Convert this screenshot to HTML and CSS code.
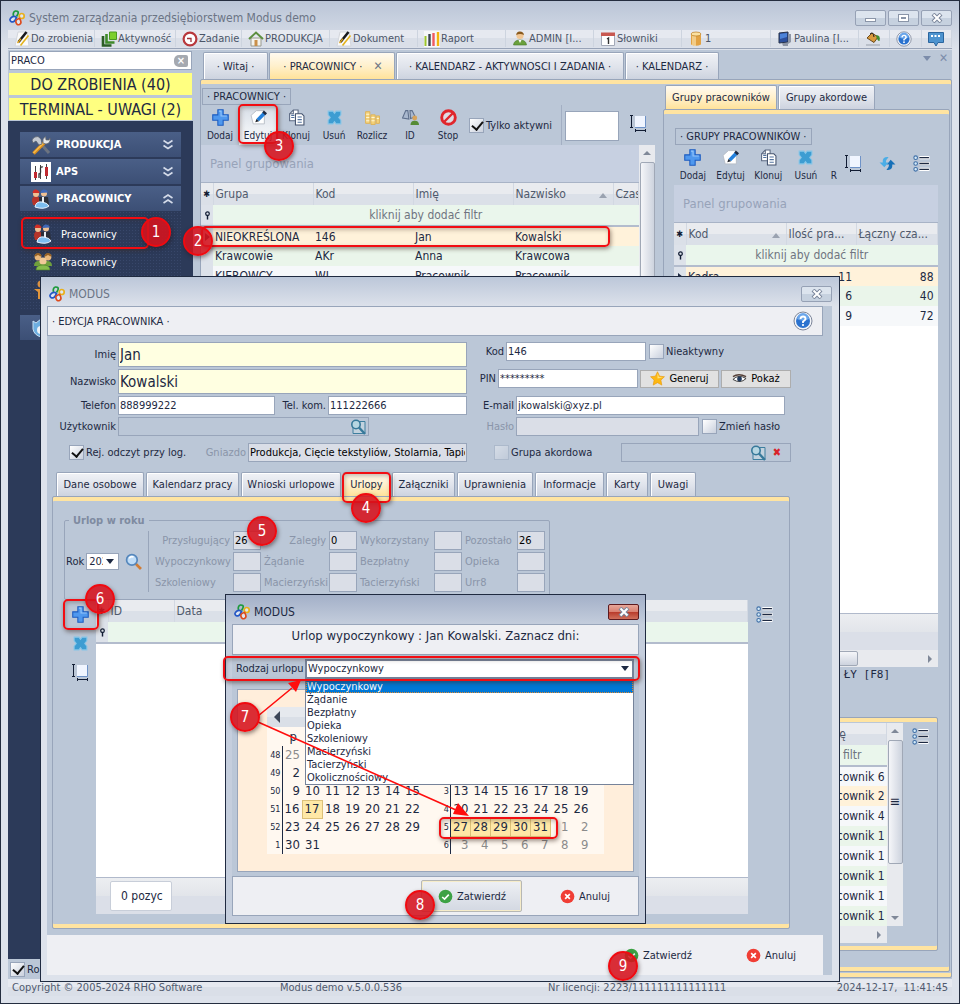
FILE: index.html
```html
<!DOCTYPE html>
<html lang="pl">
<head>
  <meta charset="UTF-8" />
  <meta name="viewport" content="width=device-width, initial-scale=1.0" />
  <title>System zarządzania przedsiębiorstwem Modus demo</title>
  <link rel="stylesheet" href="styles.css">
</head>
<body>
  <!-- Ikony -->
  <svg class="sprite" aria-hidden="true">
    <symbol id="i-logo" viewBox="0 0 16 16"><g fill="#dfe6f0" stroke-width="1.700"><path d="M4.500 6Q3.500 2 6.500 1Q10 .8 9 4L7.500 6.500" fill="none" stroke="#1c9a3c"/><circle cx="12.700" cy="6" r="2.500" stroke="#e9b01c"/><path d="M7.500 7.500Q5.500 5.500 3 7Q-.5 9.500 2 11.500Q4.500 13 6.500 9.500z" stroke="#2457c5"/><path d="M10.500 8.500Q6 9.500 7 12.500Q8 15.500 10.500 14.500Q13.500 13 10.500 8.500z" stroke="#dd4a1c"/></g></symbol>
    <symbol id="i-note" viewBox="0 0 16 16"><path d="M4 1h9l2 14H1z" fill="#fafafa" stroke="#d3d6dc"/><path d="M4.500 11L12.500 1" stroke="#17191d" stroke-width="2.600"/><path d="M3.500 12l3.500-4.200" stroke="#e0a51a" stroke-width="1.400"/><path d="M6.500 14.500L14.500 4.500" stroke="#e3b21c" stroke-width="1.600"/></symbol>
    <symbol id="i-activity" viewBox="0 0 16 16"><path d="M2 5v9.500h8.500" fill="none" stroke="#2b5d24" stroke-width="2.600"/><path d="M5.500 3v8.500h8" fill="none" stroke="#3f8a2a" stroke-width="2.600"/><path d="M8.500 1h7v7.500h-7z" fill="#7ccf2c" stroke="#4b9a20"/></symbol>
    <symbol id="i-clock" viewBox="0 0 16 16"><circle cx="8" cy="8" r="6.400" fill="#fff" stroke="#b8383c" stroke-width="2.200"/><path d="M5 7.500h4V11" fill="none" stroke="#a03438" stroke-width="1.300"/></symbol>
    <symbol id="i-house" viewBox="0 0 16 16"><path d="M3 7h10v8H3z" fill="#f3f3ee" stroke="#9a9a90"/><path d="M1 8l7-6.500L15 8" fill="none" stroke="#5c8e3f" stroke-width="2"/><path d="M6.500 9h3v6h-3z" fill="#c98f4a"/></symbol>
    <symbol id="i-bars" viewBox="0 0 16 16"><path d="M0 0h16v16H0z" fill="#f6f7f9"/><path d="M1.500 5v10" stroke="#9cc52c" stroke-width="2"/><path d="M5.500 3v12" stroke="#3a4450" stroke-width="2.400"/><path d="M9.500 2v13" stroke="#f05a60" stroke-width="2.400"/><path d="M14 1v14" stroke="#f3b50e" stroke-width="2.400"/></symbol>
    <symbol id="i-user" viewBox="0 0 16 16"><circle cx="8" cy="4.500" r="3.600" fill="#f2c795"/><path d="M4.200 4Q4.500.3 8 .5T12 4Q8 1.800 4.200 4z" fill="#8a5a1e"/><path d="M1.500 14Q2 9 8 9t6.500 5z" fill="#6aa03c" stroke="#48782a" stroke-width=".6"/><path d="M6.500 9h3L8 12z" fill="#fff"/></symbol>
    <symbol id="i-cal" viewBox="0 0 16 16"><path d="M1.500 2.500h13v12h-13z" fill="#fff" stroke="#a4aab8"/><path d="M1 1.500h14V5H1z" fill="#c85850"/><path d="M7 8l1.500-1v6" fill="none" stroke="#333" stroke-width="1.400"/></symbol>
    <symbol id="i-db" viewBox="0 0 16 16"><path d="M3 3v10.500Q8 16 13 13.500V3z" fill="#e2a243"/><path d="M5 4v10.500M7 4v11" stroke="#fbe3ae" stroke-width="1.300"/><ellipse cx="8" cy="3" rx="5" ry="2" fill="#fbe0a0" stroke="#b87a20" stroke-width=".7"/></symbol>
    <symbol id="i-monitor" viewBox="0 0 16 16"><path d="M2 2l9-1v10l-9 1z" fill="#2c4f9c" stroke="#27324a"/><path d="M3 3l7-1v4L3 8z" fill="#4d83d8"/><path d="M11 3h3v8l-3 2zM5 12h6v3H6z" fill="#8d95a5"/></symbol>
    <symbol id="i-bucket" viewBox="0 0 16 16"><path d="M2 7l5-5 6 4-4 5.500z" fill="#d99a3c" stroke="#6b4a1c"/><path d="M5 3q3-3 4 3" fill="none" stroke="#222"/><path d="M11 4q5 0 3.500 6Q12 10 11 4z" fill="#3f8c30"/><path d="M1 13h14v2H1z" fill="#b9bfc9"/></symbol>
    <symbol id="i-help" viewBox="0 0 20 20"><circle cx="10" cy="10" r="9" fill="#f4f6fa" stroke="#7b8498"/><circle cx="10" cy="10" r="7" fill="#2a72cf"/><path d="M4 8a6 6 0 0 1 12 0q-6 3-12 0z" fill="#6ba6ea"/><path d="M7.500 8q.2-2.500 2.600-2.500T12.600 8Q12 9.500 10 10.500V12" fill="none" stroke="#fff" stroke-width="1.800"/><circle cx="10" cy="14" r="1.100" fill="#fff"/></symbol>
    <symbol id="i-chat" viewBox="0 0 16 16"><path d="M.5 1.500h15v10H10l-2 3.500-2-3.500H.5z" fill="#4d93cf" stroke="#2a659e"/><path d="M3 5h10" stroke="#fff" stroke-width="2" stroke-dasharray="2 1.500"/></symbol>
    <symbol id="i-tools" viewBox="0 0 20 20"><path d="M10 9l8 9" stroke="#6d7480" stroke-width="3"/><path d="M2.500 18.500L13 8" stroke="#d98d1e" stroke-width="3.600"/><path d="M2.500 18L12.500 8" stroke="#f6bd4e" stroke-width="1.400"/><path d="M1 5q2-4 6-3.500L10 4l1 5-3 1-3-4-3 2z" fill="#c4c9d1" stroke="#565d68" stroke-width=".7"/><path d="M12 8q-1-4 2.500-6.500L15 5l3 0 1-2q1 5-4 6z" fill="#e3e6ea" stroke="#666" stroke-width=".7"/></symbol>
    <symbol id="i-aps" viewBox="0 0 20 20"><path d="M0 0h20v20H0z" fill="#fff"/><path d="M4.500 4v14M9.500 3v14M15.500 2v15" stroke="#444"/><path d="M3 10h3v6H3zM14 5h3v9h-3z" fill="#c02a30"/><path d="M12 5q-3-1-2.500 3T8 12v4" fill="none" stroke="#333" stroke-width="1.300"/></symbol>
    <symbol id="i-workers" viewBox="0 0 20 20"><path d="M1 12Q1 7 5 7t4 6l-2 3H2z" fill="#b5342a"/><circle cx="5" cy="5" r="3" fill="#efc093"/><path d="M1.500 4Q2 0 5 .5T8.500 4z" fill="#d22f26"/><circle cx="13" cy="4.500" r="3" fill="#efc093"/><path d="M9.500 4Q10 .5 13 .5T17 3.500z" fill="#3f68b8"/><path d="M8 8h9l1 8H8z" fill="#2b2e38"/><path d="M11 8h2v7h-2z" fill="#e8edf3"/><path d="M4 18q1-6 7-5t7 4q-5 4-14 1z" fill="#7cbdf0" stroke="#e7f3ff"/></symbol>
    <symbol id="i-team" viewBox="0 0 20 20"><circle cx="5" cy="5" r="3.400" fill="#e9b87c"/><circle cx="15" cy="5" r="3.400" fill="#e9b87c"/><path d="M2 4q3-4 6 0M12 4q3-4 6 0" stroke="#9b6426" stroke-width="2" fill="none"/><path d="M1 14q0-5 5-5h8q5 0 5 5z" fill="#6fa03d"/><circle cx="10" cy="9" r="3.600" fill="#f1c998"/><path d="M3 18q0-5 7-5t7 5z" fill="#86bc4c" stroke="#4c7b28" stroke-width=".6"/></symbol>
    <symbol id="i-person" viewBox="0 0 20 20"><circle cx="8" cy="4" r="3.500" fill="#d99042"/><path d="M1 9h14l-3 3v7H5v-7z" fill="#e0953c"/></symbol>
    <symbol id="i-shield" viewBox="0 0 20 20"><path d="M2 3l3 2 5-4 5 4 3-2v8q-1 6-8 8-7-2-8-8z" fill="#6daee0" stroke="#c8e0f4"/><circle cx="10" cy="12" r="4" fill="#eef3f8"/></symbol>
    <symbol id="i-plus" viewBox="0 0 16 16"><path d="M5.500.7h5v4.800h4.800v5h-4.800v4.800h-5v-4.800H.7v-5h4.800z" fill="#4f98ee" stroke="#1d5cc0"/><path d="M6.500 2h2v4.500H14" fill="none" stroke="#93c4fa"/></symbol>
    <symbol id="i-edit" viewBox="0 0 16 16"><path d="M1 6l5-4.500h7.500V14H3z" fill="#fff" stroke="#b4b9c3" stroke-width=".8"/><path d="M6 9.500L12 3l2.500 2.300L8.500 11.500z" fill="#2380dc"/><path d="M11.500 3.300L13 1.500l3 2.500-1.600 1.800z" fill="#1c2a44"/><path d="M5 12.500L6 9.500l2.500 2z" fill="#20242c"/></symbol>
    <symbol id="i-clone" viewBox="0 0 16 16"><path d="M1.500 4.500L5 1h4.500v10h-8z" fill="#fff" stroke="#5b6982"/><path d="M7 4.500h6l2 2V15H7z" fill="#fff" stroke="#44536e"/><path d="M9 7.500h4M9 10h4M9 12.500h4M3 6h3M3 8h3" stroke="#52739f"/><path d="M5 1v3.500H1.500" fill="none" stroke="#5b6982"/></symbol>
    <symbol id="i-del" viewBox="0 0 16 16"><path d="M2 2h4.500L8 4l1.500-2H14v3.500L12 8l2 2.500V14H9.500L8 12l-1.500 2H2v-3.500L4 8 2 5.500z" fill="#3d9dd2" stroke="#86c6e8"/></symbol>
    <symbol id="i-coins" viewBox="0 0 16 16"><path d="M1.500 2.500h4v11h-4zM6.500 5.500h4v9h-4zM11.500 6.500h3v7h-3z" fill="#f3d27c" stroke="#e0b04c" stroke-width=".8"/><path d="M2 5h3M2 8h3M2 11h3M7 8h3M7 11h3M12 9h2" stroke="#fff6d4"/></symbol>
    <symbol id="i-binoc" viewBox="0 0 16 16"><path d="M.5 8.500L3.500 1.500h2l1 8zM7.500 1.500h2l3 6-4.500 1.500z" fill="#a9b8ce" stroke="#5e6f8b"/><circle cx="12" cy="8.500" r="2.300" fill="#d7a35b"/><path d="M8 15q0-4 4-4t4 4z" fill="#558b35"/></symbol>
    <symbol id="i-stop" viewBox="0 0 16 16"><circle cx="8" cy="8" r="6.400" fill="#dfdde4" stroke="#e0262c" stroke-width="2.700"/><path d="M4 12l8-8" stroke="#e0262c" stroke-width="2.300"/></symbol>
    <symbol id="i-fit" viewBox="0 0 17 17"><path d="M5 1h10v11H5z" fill="#f0f5ff"/><path d="M15.500 1v11.500H5" fill="none" stroke="#6f93c8"/><path d="M0 .5h3M1.500 .5v12M0 12.500h3M5 15.500h11M5.500 14v3M15.500 14v3" stroke="#111c33" fill="none"/></symbol>
    <symbol id="i-refresh" viewBox="0 0 16 16"><path d="M9 2Q3 1.500 3.500 7H.5l4.500 4.500L9 7H6.500Q6.500 4 9 2z" fill="#4aade6"/><path d="M7 14q6 1 5.500-5h3L11 4.500 7.500 9h2Q9.500 12 7 14z" fill="#1670b8"/></symbol>
    <symbol id="i-list" viewBox="0 0 16 16"><g fill="#d6ecfa" stroke="#3e6ea6"><circle cx="2.500" cy="2.500" r="1.700"/><circle cx="2.500" cy="8" r="1.700"/><circle cx="2.500" cy="13.500" r="1.700"/></g><path d="M6 2.500h9.500M6 8h9.500M6 13.500h9.500" stroke="#fff" stroke-width="3"/><path d="M6 2.500h9M6 8h9M6 13.500h9" stroke="#1d2942" stroke-width="1.200"/></symbol>
    <symbol id="i-star" viewBox="0 0 16 16"><path d="M8 .8l2.200 4.700 5.200.6-3.800 3.600 1 5.300L8 12.400 3.400 15l1-5.300L.6 6.100l5.200-.6z" fill="#fdb813" stroke="#e89a10" stroke-width=".7"/><path d="M8 2l1.500 4.500L14 7 8 8z" fill="#ffe27a"/></symbol>
    <symbol id="i-eye" viewBox="0 0 16 16"><path d="M1 9q6-6 14-1-6 6-14 1z" fill="#fff" stroke="#333"/><circle cx="8" cy="8.500" r="2.600" fill="#223a5e"/><path d="M1 6q6-4 14 0" fill="none" stroke="#554038" stroke-width="1.500"/></symbol>
    <symbol id="i-ok" viewBox="0 0 16 16"><circle cx="8" cy="8" r="7.300" fill="#3da245"/><path d="M4.500 8.500l2.500 2.300 4.500-4.800" fill="none" stroke="#fff" stroke-width="1.700"/></symbol>
    <symbol id="i-cancel" viewBox="0 0 16 16"><circle cx="8" cy="8" r="7.300" fill="#f03e35"/><path d="M5.500 5.500l5 5M10.500 5.500l-5 5" stroke="#fff" stroke-width="1.800"/></symbol>
    <symbol id="i-search" viewBox="0 0 16 16"><path d="M10 10l5 5" stroke="#d07c35" stroke-width="2.600"/><circle cx="6.500" cy="6.500" r="5" fill="#bfdcf7" stroke="#5587bc" stroke-width="1.600"/><path d="M4 5q2-2.500 4-1" stroke="#fff" stroke-width="1.400" fill="none"/></symbol>
    <symbol id="i-find" viewBox="0 0 16 16"><path d="M3 2.500h12v12H3z" fill="#c2d2de" stroke="#3e7f9f"/><circle cx="6" cy="5.500" r="4.200" fill="#b6d6e2" stroke="#37799a" stroke-width="1.600"/><path d="M9 8.500l6 6.500" stroke="#37799a" stroke-width="2.400"/></symbol>
    <symbol id="i-down" viewBox="0 0 12 12"><path d="M1.500 1.500l4.500 3 4.500-3M1.500 6.500l4.500 3 4.500-3" fill="none" stroke="#d5dcea" stroke-width="1.600"/></symbol>
    <symbol id="i-up" viewBox="0 0 12 12"><path d="M1.500 5l4.500-3 4.500 3M1.500 10l4.500-3 4.500 3" fill="none" stroke="#d5dcea" stroke-width="1.600"/></symbol>
    <symbol id="i-x" viewBox="0 0 12 10"><path d="M2 1l8 8M10 1L2 9" stroke="#7a869b" stroke-width="4"/><path d="M2.500 1.500l7 7M9.500 1.500l-7 7" stroke="#fff" stroke-width="2"/></symbol>
    <symbol id="i-filter" viewBox="0 0 10 10"><circle cx="5" cy="3" r="2" fill="none" stroke="#111c33" stroke-width="1.400"/><path d="M5 5v4.500" stroke="#111c33" stroke-width="1.600"/></symbol>
  </svg>

  <div class="app">
    <header class="titlebar">
      <svg class="icon"><use href="#i-logo"/></svg>
      <span>System zarządzania przedsiębiorstwem Modus demo</span>
      <div class="winbtns">
        <button class="winbtn" aria-label="Minimalizuj"><span class="min"></span></button>
        <button class="winbtn" aria-label="Maksymalizuj"><span class="max"></span></button>
        <button class="winbtn" aria-label="Zamknij"><svg><use href="#i-x"/></svg></button>
      </div>
    </header>

    <nav class="mainbar">
      <button><svg class="icon"><use href="#i-note"/></svg>Do zrobienia</button>
      <button><svg class="icon"><use href="#i-activity"/></svg>Aktywność</button>
      <button><svg class="icon"><use href="#i-clock"/></svg>Zadanie</button>
      <button><svg class="icon"><use href="#i-house"/></svg>PRODUKCJA</button>
      <button><svg class="icon"><use href="#i-note"/></svg>Dokument</button>
      <button><svg class="icon"><use href="#i-bars"/></svg>Raport</button>
      <button><svg class="icon"><use href="#i-user"/></svg>ADMIN [I...</button>
      <button><svg class="icon"><use href="#i-cal"/></svg>Słowniki</button>
      <button><svg class="icon"><use href="#i-db"/></svg>1</button>
      <button><svg class="icon"><use href="#i-monitor"/></svg>Paulina [I...</button>
      <button aria-label="Kolory"><svg class="icon"><use href="#i-bucket"/></svg></button>
      <button aria-label="Pomoc"><svg class="icon"><use href="#i-help"/></svg></button>
      <button aria-label="Wiadomości"><svg class="icon"><use href="#i-chat"/></svg></button>
    </nav>

    <div class="workspace">
      <aside class="sidebar">
        <div class="search">
          <input type="text" value="PRACO" aria-label="Szukaj">
          <button aria-label="Wyczyść">×</button>
        </div>
        <button class="alert">DO ZROBIENIA (40)</button>
        <button class="alert">TERMINAL - UWAGI (2)</button>
        <div class="menu">
          <button class="group"><svg><use href="#i-tools"/></svg><span>PRODUKCJA</span><svg class="chev"><use href="#i-down"/></svg></button>
          <button class="group"><svg><use href="#i-aps"/></svg><span>APS</span><svg class="chev"><use href="#i-down"/></svg></button>
          <button class="group"><svg><use href="#i-workers"/></svg><span>PRACOWNICY</span><svg class="chev"><use href="#i-up"/></svg></button>
          <div class="submenu">
            <a href="#"><svg><use href="#i-workers"/></svg>Pracownicy</a>
            <a href="#"><svg><use href="#i-team"/></svg>Pracownicy</a>
            <a href="#" aria-label="Kadry"><svg><use href="#i-person"/></svg></a>
          </div>
          <button class="group" aria-label="Ochrona"><svg><use href="#i-shield"/></svg></button>
        </div>
        <label class="remember"><input type="checkbox" class="check" checked>Ro</label>
      </aside>

      <main class="main">
        <div class="tabs maintabs">
          <button class="tab">· Witaj ·</button>
          <button class="tab active">· PRACOWNICY · <b>✕</b></button>
          <button class="tab">· KALENDARZ - AKTYWNOSCI I ZADANIA ·</button>
          <button class="tab">· KALENDARZ ·</button>
          <span class="tabtools"><i class="tri"></i><b>✕</b></span>
        </div>
        <div class="panel columns">
          <section class="left">
            <span class="caption">· PRACOWNICY ·</span>
            <div class="toolbar">
              <button><svg><use href="#i-plus"/></svg>Dodaj</button>
              <button class="hot"><svg><use href="#i-edit"/></svg>Edytuj</button>
              <button><svg><use href="#i-clone"/></svg>Klonuj</button>
              <button><svg><use href="#i-del"/></svg>Usuń</button>
              <button><svg><use href="#i-coins"/></svg>Rozlicz</button>
              <button><svg><use href="#i-binoc"/></svg>ID</button>
              <button><svg><use href="#i-stop"/></svg>Stop</button>
              <label class="onlyactive"><input type="checkbox" class="check" checked>Tylko aktywni</label>
              <input type="text" class="quick" aria-label="Filtr">
              <button aria-label="Dopasuj" class="solo"><svg><use href="#i-fit"/></svg></button>
            </div>
            <div class="gridwrap">
              <div class="gridbody">
                <div class="grouppanel">Panel grupowania</div>
                <table class="grid">
                  <colgroup><col class="c-ind"><col class="c-100"><col class="c-100"><col class="c-100"><col class="c-100"><col></colgroup>
                  <thead>
                    <tr><th>✱</th><th>Grupa</th><th>Kod</th><th>Imię</th><th class="sorted">Nazwisko<i class="sort"></i></th><th>Czas</th></tr>
                    <tr class="filter"><td><svg><use href="#i-filter"/></svg></td><td colspan="5">kliknij aby dodać filtr</td></tr>
                  </thead>
                  <tbody>
                    <tr class="sel"><td><i class="cur"></i></td><td>NIEOKREŚLONA</td><td>146</td><td>Jan</td><td>Kowalski</td><td></td></tr>
                    <tr class="even"><td></td><td>Krawcowie</td><td>AKr</td><td>Anna</td><td>Krawcowa</td><td></td></tr>
                    <tr><td></td><td>KIEROWCY</td><td>WL</td><td>Pracownik</td><td>Pracownik</td><td></td></tr>
                  </tbody>
                </table>
              </div>
              <div class="vscroll"><i class="up"></i><span class="thumb"></span></div>
            </div>
          </section>

          <section class="right">
            <div class="tabs righttabs">
              <button class="tab active">Grupy pracowników</button>
              <button class="tab">Grupy akordowe</button>
            </div>
            <div class="panel rightpanel">
              <span class="caption">· GRUPY PRACOWNIKÓW ·</span>
              <div class="toolbar">
                <button><svg><use href="#i-plus"/></svg>Dodaj</button>
                <button><svg><use href="#i-edit"/></svg>Edytuj</button>
                <button><svg><use href="#i-clone"/></svg>Klonuj</button>
                <button><svg><use href="#i-del"/></svg>Usuń</button>
                <button class="cut">R</button>
                <button aria-label="Dopasuj" class="solo"><svg><use href="#i-fit"/></svg></button>
                <button aria-label="Odśwież" class="solo"><svg><use href="#i-refresh"/></svg></button>
                <button aria-label="Lista" class="solo"><svg><use href="#i-list"/></svg></button>
              </div>
              <div class="gridbody groups">
                <div class="grouppanel">Panel grupowania</div>
                <table class="grid">
                  <colgroup><col class="c-ind"><col class="c-100"><col class="c-70"><col></colgroup>
                  <thead>
                    <tr><th>✱</th><th class="sorted">Kod<i class="sort"></i></th><th>Ilość pra...</th><th>Łączny cza...</th></tr>
                    <tr class="filter"><td><svg><use href="#i-filter"/></svg></td><td colspan="3">kliknij aby dodać filtr</td></tr>
                  </thead>
                  <tbody>
                    <tr class="sel"><td><i class="cur"></i></td><td>Kadra</td><td class="num">11</td><td class="num">88</td></tr>
                    <tr class="even"><td></td><td></td><td class="num">6</td><td class="num">40</td></tr>
                    <tr><td></td><td></td><td class="num">9</td><td class="num">72</td></tr>
                  </tbody>
                </table>
              </div>
              <div class="gridfoot"></div>
              <div class="hscroll"><span class="thumb"></span><i class="rt"></i></div>
              <p class="shortcut">ŁY [F8]</p>
              <div class="panel members">
                <div class="memgrid">
                  <table class="grid">
                    <thead>
                      <tr><th>Imię</th></tr>
                      <tr class="filter"><td>filtr</td></tr>
                    </thead>
                    <tbody>
                      <tr><td>Pracownik 6</td></tr>
                      <tr class="sel"><td>Pracownik 2</td></tr>
                      <tr><td>Pracownik 4</td></tr>
                      <tr class="even"><td>Pracownik 1</td></tr>
                      <tr><td>Pracownik 1</td></tr>
                      <tr class="even"><td>Pracownik 1</td></tr>
                      <tr><td>Pracownik 1</td></tr>
                      <tr class="even"><td>Pracownik 1</td></tr>
                    </tbody>
                  </table>
                  <div class="hscroll"><i class="rt"></i></div>
                </div>
                <div class="vscroll"><i class="up"></i><span class="thumb grip">≡</span><i class="dn"></i></div>
                <button class="solo" aria-label="Lista"><svg><use href="#i-list"/></svg></button>
              </div>
            </div>
          </section>
        </div>
      </main>
    </div>

    <footer class="status">
      <span>Copyright © 2005-2024 RHO Software</span>
      <span>Modus demo v.5.0.0.536</span>
      <span>Nr licencji: 2223/111111111111111</span>
      <span>2024-12-17, &nbsp;11:41:45</span>
    </footer>

    <!-- Okno edycji pracownika -->
    <section class="dialog edit" role="dialog" aria-label="Edycja pracownika">
      <header class="dlgtitle">
        <svg class="icon"><use href="#i-logo"/></svg><span>MODUS</span>
        <button class="winbtn" aria-label="Zamknij"><svg><use href="#i-x"/></svg></button>
      </header>
      <div class="dlgbody">
        <div class="strip">
          <span>· EDYCJA PRACOWNIKA ·</span>
          <button aria-label="Pomoc"><svg><use href="#i-help"/></svg></button>
        </div>
        <form class="form">
          <div class="frow big"><label for="imie">Imię</label><input type="text" id="imie" value="Jan"></div>
          <div class="frow"><label for="kod">Kod</label><input type="text" id="kod" value="146" class="w140"><label class="chk"><input type="checkbox" class="check">Nieaktywny</label></div>
          <div class="frow big"><label for="nazwisko">Nazwisko</label><input type="text" id="nazwisko" value="Kowalski"></div>
          <div class="frow pinrow"><label for="pin">PIN</label><input type="text" id="pin" value="*********" class="w140"><button type="button"><svg><use href="#i-star"/></svg>Generuj</button><button type="button"><svg><use href="#i-eye"/></svg>Pokaż</button></div>
          <div class="frow"><label for="telefon">Telefon</label><input type="text" id="telefon" value="888999222" class="w157"><label for="kom" class="mid">Tel. kom.</label><input type="text" id="kom" value="111222666"></div>
          <div class="frow wide"><label for="email">E-mail</label><input type="text" id="email" value="jkowalski@xyz.pl" class="w269"></div>
          <div class="frow"><label for="uzytkownik">Użytkownik</label><span class="lookup w251"><input type="text" id="uzytkownik"><svg><use href="#i-find"/></svg></span></div>
          <div class="frow wide"><label for="haslo" class="dim">Hasło</label><input type="text" id="haslo" class="w183" disabled><label class="chk"><input type="checkbox" class="check">Zmień hasło</label></div>
          <div class="frow last"><label class="chk"><input type="checkbox" class="check" checked>Rej. odczyt przy log.</label><label for="gniazdo" class="dim">Gniazdo</label><input type="text" id="gniazdo" class="w219 grey" value="Produkcja, Cięcie tekstyliów, Stolarnia, Tapicernia"></div>
          <div class="frow last"><label class="chk"><input type="checkbox" class="check" disabled>Grupa akordowa</label><span class="lookup w170"><input type="text" aria-label="Grupa akordowa"><svg><use href="#i-find"/></svg><b>✖</b></span></div>
        </form>
        <div class="tabs edittabs">
          <button class="tab">Dane osobowe</button>
          <button class="tab">Kalendarz pracy</button>
          <button class="tab">Wnioski urlopowe</button>
          <button class="tab active">Urlopy</button>
          <button class="tab">Załączniki</button>
          <button class="tab">Uprawnienia</button>
          <button class="tab">Informacje</button>
          <button class="tab">Karty</button>
          <button class="tab">Uwagi</button>
        </div>
        <div class="panel leave">
          <fieldset class="year">
            <legend>Urlop w roku</legend>
            <div class="yearpick">
              <label for="rok">Rok</label>
              <span class="combo"><select id="rok"><option>2024</option></select><i class="tri"></i></span>
              <button type="button" aria-label="Szukaj"><svg><use href="#i-search"/></svg></button>
            </div>
            <div class="days">
              <label for="d1" class="r">Przysługujący</label><input id="d1" value="26"><label for="d2" class="r">Zaległy</label><input id="d2" value="0"><label for="d3">Wykorzystany</label><input id="d3"><label for="d4">Pozostało</label><input id="d4" value="26">
              <label for="d5">Wypoczynkowy</label><input id="d5"><label for="d6">Żądanie</label><input id="d6"><label for="d7">Bezpłatny</label><input id="d7"><label for="d8">Opieka</label><input id="d8">
              <label for="d9">Szkoleniowy</label><input id="d9"><label for="d10">Macierzyński</label><input id="d10"><label for="d11">Tacierzyński</label><input id="d11"><label for="d12">Urr8</label><input id="d12">
            </div>
          </fieldset>
          <div class="leavegrid">
            <div class="vtools">
              <button aria-label="Dodaj"><svg><use href="#i-plus"/></svg></button>
              <button aria-label="Usuń"><svg><use href="#i-del"/></svg></button>
              <button aria-label="Dopasuj"><svg><use href="#i-fit"/></svg></button>
            </div>
            <div class="gridbody leavebody">
              <table class="grid">
                <colgroup><col class="c-ind"><col class="c-66"><col></colgroup>
                <thead>
                  <tr><th>✱</th><th>ID</th><th>Data</th></tr>
                  <tr class="filter"><td><svg><use href="#i-filter"/></svg></td><td colspan="2"></td></tr>
                </thead>
              </table>
              <div class="blank"></div>
              <div class="gridfoot"><span>0 pozyc</span></div>
            </div>
            <button class="solo" aria-label="Lista"><svg><use href="#i-list"/></svg></button>
          </div>
        </div>
        <div class="actions">
          <button><svg><use href="#i-ok"/></svg>Zatwierdź</button>
          <button><svg><use href="#i-cancel"/></svg>Anuluj</button>
        </div>
      </div>
    </section>

    <!-- Okno wyboru dni urlopu -->
    <section class="dialog pick" role="dialog" aria-label="Urlop">
      <header class="dlgtitle">
        <svg class="icon"><use href="#i-logo"/></svg><span>MODUS</span>
        <button class="winbtn red" aria-label="Zamknij"><svg><use href="#i-x"/></svg></button>
      </header>
      <div class="dlgbody">
        <div class="strip">Urlop wypoczynkowy : Jan Kowalski. Zaznacz dni:</div>
        <div class="kind">
          <label for="rodzaj">Rodzaj urlopu</label>
          <span class="combo"><select id="rodzaj"><option>Wypoczynkowy</option></select><i class="tri"></i>
            <ul class="options" role="listbox" aria-label="Rodzaj urlopu">
              <li class="on" role="option" aria-selected="true">Wypoczynkowy</li>
              <li role="option">Żądanie</li>
              <li role="option">Bezpłatny</li>
              <li role="option">Opieka</li>
              <li role="option">Szkoleniowy</li>
              <li role="option">Macierzyński</li>
              <li role="option">Tacierzyński</li>
              <li role="option">Okolicznościowy</li>
            </ul>
          </span>
        </div>
        <div class="calbox">
          <div class="cal">
            <div class="calhead"><button aria-label="Poprzedni miesiąc"><i></i></button></div>
            <div class="months">
              <table>
                <tr class="wd"><th></th><th>p</th><th></th><th></th><th></th><th></th><th></th><th></th></tr>
                <tr><th>48</th><td class="out">25</td><td></td><td></td><td></td><td></td><td></td><td></td></tr>
                <tr><th>49</th><td>2</td><td></td><td></td><td></td><td></td><td></td><td></td></tr>
                <tr><th>50</th><td>9</td><td>10</td><td>11</td><td>12</td><td>13</td><td>14</td><td>15</td></tr>
                <tr><th>51</th><td>16</td><td class="pickd">17</td><td>18</td><td>19</td><td>20</td><td>21</td><td>22</td></tr>
                <tr><th>52</th><td>23</td><td>24</td><td>25</td><td>26</td><td>27</td><td>28</td><td>29</td></tr>
                <tr><th>1</th><td>30</td><td>31</td><td></td><td></td><td></td><td></td><td></td></tr>
              </table>
              <table>
                <tr class="wd"><th></th><th></th><th></th><th></th><th></th><th></th><th></th><th></th></tr>
                <tr><th></th><td></td><td></td><td></td><td></td><td></td><td></td><td></td></tr>
                <tr><th></th><td></td><td></td><td></td><td></td><td></td><td></td><td></td></tr>
                <tr><th>3</th><td>13</td><td>14</td><td>15</td><td>16</td><td>17</td><td>18</td><td>19</td></tr>
                <tr><th>4</th><td>20</td><td>21</td><td>22</td><td>23</td><td>24</td><td>25</td><td>26</td></tr>
                <tr><th>5</th><td class="pickd">27</td><td class="pickd">28</td><td class="pickd">29</td><td class="pickd">30</td><td class="pickd">31</td><td class="out">1</td><td class="out">2</td></tr>
                <tr><th>6</th><td class="out">3</td><td class="out">4</td><td class="out">5</td><td class="out">6</td><td class="out">7</td><td class="out">8</td><td class="out">9</td></tr>
              </table>
            </div>
          </div>
        </div>
        <div class="actions">
          <button class="default"><svg><use href="#i-ok"/></svg>Zatwierdź</button>
          <button><svg><use href="#i-cancel"/></svg>Anuluj</button>
        </div>
      </div>
    </section>

    <!-- Oznaczenia kolejnych kroków -->
    <div class="steps">
      <span class="ring r1"></span><span class="ring r2"></span><span class="ring r3"></span><span class="ring r4"></span>
      <span class="ring r6"></span><span class="ring r7"></span><span class="ring r7b"></span>
      <svg class="arrows" viewBox="0 0 220 150">
        <path d="M6 42L40 14M6 48L204 136" stroke="#ff0d0d" stroke-width="1.600" fill="none"/>
        <path d="M49 6L44 18L36 9zM217 142L201 140L206 129z" fill="#ff0d0d"/>
      </svg>
      <span class="badge b1">1</span><span class="badge b2">2</span><span class="badge b3">3</span>
      <span class="badge b4">4</span><span class="badge b5">5</span><span class="badge b6">6</span>
      <span class="badge b7">7</span><span class="badge b8">8</span><span class="badge b9">9</span>
    </div>
  </div>
</body>
</html>
```
FILE: styles.css
```css
* {
  box-sizing: border-box;
}
body {
  margin: 0;
  font-family: Tahoma, "DejaVu Sans Condensed", "DejaVu Sans", sans-serif;
  font-size: 11px;
  color: #1d2942;
}
button, input, select {
  font: inherit;
  color: inherit;
  margin: 0;
}
button {
  padding: 0;
  border: none;
  background: none;
  white-space: nowrap;
}
.sprite {
  display: none;
}
.icon {
  width: 16px;
  height: 16px;
  flex: none;
}
i {
  display: inline-block;
}

/* Okno główne */
.app {
  position: relative;
  display: flex;
  flex-direction: column;
  min-height: 100vh;
  padding: 0 7px 7px;
  border: 1px solid #242d3f;
  background: linear-gradient(#bac5d7, #dde2eb 48px);
  overflow: hidden;
}
.titlebar {
  display: flex;
  align-items: center;
  gap: 4px;
  height: 29px;
  padding: 5px 0 0 1px;
  font-size: 12px;
  color: #6b7485;
}
.winbtns {
  display: flex;
  gap: 2px;
  margin-left: auto;
}
.winbtn {
  display: flex;
  align-items: center;
  justify-content: center;
  width: 31px;
  height: 16px;
  border: 1px solid #96a1b5;
  border-radius: 2px;
  background: linear-gradient(#dce4ee 50%, #c6d1df 50%);
}
.winbtn svg {
  width: 12px;
  height: 10px;
}
.winbtn .min {
  width: 11px;
  height: 4px;
  margin-top: 3px;
  border: 1px solid #8a95a8;
  background: #fff;
}
.winbtn .max {
  width: 11px;
  height: 8px;
  border: 1px solid #8a95a8;
  background: #8a95a8;
  box-shadow: inset 0 0 0 2px #fff;
}
.winbtn.red {
  border-color: #5c1a1f;
  background: linear-gradient(#e7a79a, #d97f70 50%, #b8392a 50%, #d0705c);
}
.mainbar {
  display: grid;
  grid-template-columns: 87px 81px 66px 88px 88px 88px 88px 88px 89px 88px 31px 32px 1fr;
  height: 19px;
  border-bottom: 1px solid #98a3b7;
  color: #4b5568;
}
.mainbar button {
  display: flex;
  align-items: center;
  gap: 1px;
  height: 17px;
  padding-left: 6px;
  border-right: 1px solid #cdd4df;
  background: linear-gradient(#e6e9f0 50%, #dadfe8 50%);
  overflow: hidden;
}
.workspace {
  display: flex;
  flex: 1;
  margin-top: 1px;
  background: #bbc7d7;
}

/* Menu boczne */
.sidebar {
  display: flex;
  flex-direction: column;
  width: 185px;
  flex: none;
}
.search {
  display: flex;
  align-items: center;
  height: 19px;
  margin: 1px 1px 0;
  padding-right: 3px;
  border: 1px solid #98a5ba;
  background: #fff;
}
.search input {
  flex: 1;
  min-width: 0;
  padding: 0 1px;
  border: none;
  background: none;
}
.search button {
  width: 14px;
  height: 12px;
  border-radius: 5px 2px 2px 5px;
  background: #a5a9b0;
  color: #fff;
  font-weight: bold;
  line-height: 11px;
}
.alert {
  height: 22px;
  margin: 3px 1px 0;
  background: #ffff80;
  font-size: 16px;
}
.menu {
  flex: 1;
  margin-top: 1px;
  padding: 11px 12px 0;
  background: #2c3a59;
}
.group {
  display: flex;
  align-items: center;
  gap: 5px;
  width: 100%;
  height: 25px;
  margin-bottom: 2px;
  padding: 0 7px 0 11px;
  background: linear-gradient(#4a5f87, #3c4f75);
  color: #fff;
  font-weight: bold;
}
.group svg {
  width: 20px;
  height: 20px;
}
.group .chev {
  width: 12px;
  height: 12px;
  margin-left: auto;
}
.submenu {
  margin: -2px 0 4px;
  padding: 9px 0 7px;
  background: radial-gradient(#38476a 1px, #2c3a59 1px) 0 0 / 3px 3px;
}
.submenu a {
  display: flex;
  align-items: center;
  gap: 8px;
  height: 28px;
  padding-left: 13px;
  color: #fff;
  text-decoration: none;
}
.submenu svg {
  width: 20px;
  height: 20px;
}
.remember {
  display: flex;
  align-items: center;
  gap: 2px;
  height: 20px;
  padding-left: 2px;
}
.check {
  appearance: none;
  width: 15px;
  height: 15px;
  flex: none;
  border: 1px solid #98a5ba;
  background: linear-gradient(135deg, #fff, #c9d0dd);
}
.check:checked::after {
  content: "";
  display: block;
  width: 5px;
  height: 9px;
  margin: 0 0 0 4px;
  border: solid #111;
  border-width: 0 2px 2px 0;
  transform: rotate(40deg);
}
.check:disabled {
  opacity: .4;
}

/* Zakładki i panele */
.main {
  display: flex;
  flex-direction: column;
  flex: 1;
  min-width: 0;
  padding: 1px 0 0 7px;
}
.tabs {
  display: grid;
  align-items: end;
  gap: 2px;
}
.tab {
  height: 24px;
  border: 1px solid #98a5ba;
  border-bottom: none;
  border-radius: 2px 2px 0 0;
  background: linear-gradient(#f0f2f6, #dfe3eb 55%, #cdd3df);
  box-shadow: inset 1px 1px #fff;
}
.tab.active {
  background: linear-gradient(#fffaf0, #fff0cc 50%, #ffe29a);
  box-shadow: none;
}
.maintabs {
  grid-template-columns: 65px 126px 228px 94px 1fr;
  gap: 1px;
  height: 28px;
  padding-left: 3px;
}
.maintabs .tab {
  height: 27px;
}
.maintabs .active {
  padding-left: 2px;
}
.maintabs b {
  margin-left: 8px;
  color: #707786;
  font-size: 12px;
}
.tabtools {
  display: flex;
  align-self: start;
  justify-content: end;
  align-items: center;
  padding-right: 4px;
}
.maintabs .tabtools b {
  color: #7b8caa;
}
.tri {
  border: solid transparent;
  border-width: 5px 4px 0;
  border-top-color: #7b8caa;
}
.panel {
  border: 1px solid #98a5ba;
  border-radius: 2px;
  box-shadow: inset 0 4px #ffe4a1, inset 0 -4px #ffe4a1;
}
.columns {
  display: flex;
  flex: 1;
  gap: 8px;
  padding: 4px 0 4px;
  margin-bottom: 1px;
}
.left {
  display: flex;
  flex-direction: column;
  align-items: start;
  flex: 1;
  min-width: 0;
  padding-top: 4px;
}
.caption {
  height: 17px;
  margin-left: 1px;
  padding: 0 4px;
  border: 1px solid #98a5ba;
  line-height: 15px;
}
.toolbar {
  display: flex;
  height: 40px;
}
.toolbar button {
  display: flex;
  flex-direction: column;
  align-items: center;
  gap: 4px;
  width: 38px;
  padding-top: 4px;
  font-size: 10px;
}
.toolbar svg, .solo svg {
  width: 17px;
  height: 17px;
}
.toolbar .hot {
  background: linear-gradient(#d5dce6, #eef1f5 60%, #f5f6f9);
}
.toolbar .solo {
  padding-top: 10px;
}
.onlyactive {
  display: flex;
  align-items: center;
  gap: 2px;
  width: 93px;
  margin-left: 2px;
  border-right: 1px solid #a3afc3;
  white-space: nowrap;
}
.quick {
  width: 54px;
  height: 30px;
  margin: 6px 0 0 3px;
  border: 1px solid #98a5ba;
  background: #fff;
}
.gridwrap {
  display: flex;
  flex: 1;
  width: 100%;
}
.gridbody {
  flex: 1;
  min-width: 0;
  background: #fff;
}
.grouppanel {
  height: 38px;
  padding-left: 9px;
  border-bottom: 1px solid #a8b3c6;
  background: #c7d0e1;
  color: #97a3b9;
  font-size: 13px;
  line-height: 37px;
}

/* Tabele danych */
.grid {
  width: 100%;
  border-collapse: collapse;
  table-layout: fixed;
  font-size: 12px;
}
.grid th, .grid td {
  height: 20px;
  padding: 0 2px;
  overflow: hidden;
  white-space: nowrap;
  text-align: left;
}
.grid th {
  height: 22px;
  border-right: 1px solid #d2d8e2;
  background: linear-gradient(#e9ebef 50%, #dbe0e8 50%);
  color: #505a6c;
  font-weight: normal;
}
.grid th:first-child, .grid td:first-child {
  text-align: center;
}
.grid th:first-child {
  font-size: 9px;
  color: #111c33;
}
.grid td:first-child:not(:only-child) {
  background: #dde2ea;
}
.grid svg {
  display: block;
  width: 9px;
  height: 9px;
}
.grid tbody tr {
  background: #f6f8fa;
}
.grid .filter td {
  height: 21px;
  border-bottom: 2px solid #b3bccd;
  background: #eaf6ec;
  color: #6f7480;
  text-align: center;
}
.grid tbody .even {
  background: #eaf5ea;
}
.grid tbody .sel {
  background: #fff2da;
}
.grid .num {
  padding-right: 4px;
  text-align: right;
}
.grid .sorted .sort {
  float: right;
  margin: 6px 4px 0 0;
  border: solid transparent;
  border-width: 0 4px 5px;
  border-bottom-color: #9aa2b0;
}
.cur {
  border: solid transparent;
  border-width: 4px 0 4px 5px;
  border-left-color: #1d2942;
}
.c-ind {
  width: 12px;
}
.c-66 {
  width: 66px;
}
.c-70 {
  width: 70px;
}
.c-100 {
  width: 100px;
}
.vscroll {
  display: flex;
  flex-direction: column;
  align-items: center;
  width: 16px;
  padding-top: 6px;
  background: #e8eaee;
}
.thumb {
  flex: 1;
  width: 15px;
  margin-top: 7px;
  border: 1px solid #a0a8b6;
  border-radius: 2px;
  background: linear-gradient(90deg, #f5f6f9, #cdd3de);
}
.up, .dn {
  border: solid transparent;
  border-width: 0 4px 4px;
  border-bottom-color: #7f8898;
}
.dn {
  border-width: 4px 4px 0;
  border-top-color: #7f8898;
}
.rt {
  border: solid transparent;
  border-width: 4px 0 4px 4px;
  border-left-color: #7f8898;
}
.hscroll {
  display: flex;
  align-items: center;
  justify-content: end;
  height: 17px;
  padding-right: 6px;
  background: #e8eaee;
}
.hscroll .thumb {
  height: 15px;
  margin: 0 70px 0 0;
  background: linear-gradient(#f5f6f9, #cdd3de);
}
.gridfoot {
  height: 37px;
  border-top: 1px solid #b0b9cb;
  background: linear-gradient(#eceef1, #e2e5ea 50%, #dbdfe8 50%);
}

/* Prawa kolumna */
.right {
  display: flex;
  flex-direction: column;
  width: 288px;
  flex: none;
  padding: 1px 1px 1px 0;
}
.righttabs {
  grid-template-columns: 112px 97px;
  gap: 1px;
  padding-left: 2px;
}
.rightpanel {
  display: flex;
  flex-direction: column;
  align-items: stretch;
  flex: 1;
  padding: 18px 11px 20px 10px;
}
.rightpanel > .caption {
  align-self: start;
}
.rightpanel .toolbar .cut {
  width: 12px;
  align-items: start;
  padding: 25px 0 0 6px;
  overflow: hidden;
}
.rightpanel .toolbar .solo {
  width: 34px;
}
.shortcut {
  margin: 0 0 34px;
  padding-right: 48px;
  font-family: "DejaVu Sans Mono", monospace;
  line-height: 16px;
  text-align: right;
}
.members {
  display: flex;
  padding: 5px 8px 7px;
}
.memgrid {
  flex: 1;
  min-width: 0;
}
.memgrid .grid th, .memgrid .grid td {
  text-align: right;
}
.memgrid .grid th:first-child {
  font-size: 12px;
  padding-right: 40px;
  color: #505a6c;
}
.memgrid .grid .filter td {
  padding-right: 25px;
}
.members .vscroll {
  margin-bottom: 17px;
}
.members .grip {
  flex: none;
  height: 124px;
  line-height: 120px;
  font-size: 14px;
  text-align: center;
}
.members .dn {
  margin: auto 0 6px;
}
.members .solo {
  align-self: start;
  margin: 5px 0 0 9px;
}

/* Pasek stanu */
.status {
  display: grid;
  grid-template-columns: 268px 268px 1fr auto;
  height: 17px;
  padding: 0 4px;
  background: linear-gradient(#e6e9f0 50%, #dadfe8 50%);
  color: #505a6e;
  line-height: 17px;
}

/* Okna dialogowe */
.dialog {
  position: absolute;
  z-index: 1;
  display: flex;
  flex-direction: column;
  border: 1px solid #1f2a40;
}
.dlgtitle {
  display: flex;
  align-items: center;
  gap: 4px;
  height: 29px;
  padding: 6px 0 2px 2px;
  font-size: 12px;
}
.dlgtitle .winbtn {
  margin-left: auto;
}
.dlgbody {
  display: flex;
  flex-direction: column;
  flex: 1;
}
.strip {
  border: 1px solid #98a5ba;
  background: #eeeff3;
}
.actions {
  display: flex;
  background: #eeeff3;
}
.actions button {
  display: flex;
  align-items: center;
  gap: 4px;
}
.actions svg {
  width: 15px;
  height: 15px;
}
.edit {
  left: 39px;
  right: 119px;
  top: 275px;
  bottom: 21px;
  padding: 0 7px 6px 6px;
  background: linear-gradient(#bcc7d9, #dde2eb 30px);
}
.edit .dlgtitle {
  color: #6b7485;
}
.edit .dlgbody {
  background: #bbc7d7;
}
.edit .strip {
  display: flex;
  align-items: center;
  justify-content: space-between;
  height: 30px;
  margin-right: 9px;
  padding: 0 9px 0 4px;
}
.edit .strip svg {
  display: block;
  width: 20px;
  height: 20px;
}

/* Formularz */
.form {
  display: grid;
  grid-template-columns: 420px 1fr;
  grid-template-rows: 25px 25px 19px 19px 24px;
  row-gap: 2px;
  column-gap: 8px;
  margin: 6px 0 0;
}
.frow {
  display: flex;
  align-items: center;
  align-self: start;
  gap: 2px;
  height: 19px;
  white-space: nowrap;
}
.frow > label:first-child {
  min-width: 69px;
  text-align: right;
}
.frow:nth-child(even) > label:first-child {
  min-width: 29px;
}
.frow.pinrow > label:first-child {
  min-width: 21px;
}
.frow.wide > label:first-child {
  min-width: 39px;
}
.frow input[type="text"] {
  min-width: 0;
  height: 19px;
  padding: 0 1px;
  border: 1px solid #98a5ba;
  border-radius: 0;
  background: #fff;
}
.big input[type="text"], .frow #kom {
  flex: 1;
}
.frow.big, .frow.big input[type="text"] {
  height: 25px;
}
.frow.big input[type="text"] {
  background: #ffffe1;
  font-size: 15px;
}
.w140 { width: 140px; }
.w157 { width: 157px; }
.w183 { width: 183px; }
.w219 { width: 219px; }
.w251 { width: 251px; }
.w269 { width: 269px; }
.w170 { width: 170px; margin-left: auto; }
.frow input.grey, .frow input:disabled[type="text"] {
  background: #dadee7;
}
.frow input.grey {
  color: #000;
}
.frow .mid {
  width: 49px;
  text-align: right;
}
.dim {
  color: #8a95a9;
}
.chk {
  display: flex;
  align-items: center;
  gap: 2px;
  margin-left: 1px;
}
.frow.last {
  margin-top: 5px;
}
.frow.last > .chk:first-child {
  margin: 0 auto 0 22px;
}
.frow.last:nth-child(even) {
  width: 316px;
}
.frow.last:nth-child(even) > .chk {
  margin-left: 19px;
}
.pinrow button {
  display: flex;
  align-items: center;
  justify-content: center;
  gap: 4px;
  width: 79px;
  height: 18px;
  border: 1px solid #adadad;
  background: #e1e1e1;
  color: #000;
}
.pinrow button:last-child {
  width: 70px;
}
.pinrow svg {
  width: 15px;
  height: 15px;
}
.lookup {
  display: flex;
  align-items: center;
  height: 19px;
  padding-right: 2px;
  border: 1px solid #98a5ba;
}
.frow .lookup input[type="text"] {
  flex: 1;
  height: 17px;
  border: none;
  background: none;
}
.lookup svg {
  width: 16px;
  height: 16px;
}
.lookup b {
  width: 22px;
  color: #d8232a;
  text-align: center;
}
.edittabs {
  grid-template-columns: 88px 93px 100px 47px 63px 76px 69px 42px 46px;
  margin-top: 10px;
  padding-left: 9px;
}
.leave {
  display: flex;
  flex-direction: column;
  flex: 1;
  margin: 0 42px 6px 5px;
  padding: 17px 11px 14px;
}
.year {
  display: flex;
  align-self: start;
  height: 86px;
  margin: 0;
  padding: 4px 4px 4px 0;
  border: 1px solid #98a5ba;
  border-radius: 2px;
}
.year legend {
  margin-left: 4px;
  padding: 0 4px;
  color: #7f8ba1;
  font-weight: bold;
}
.yearpick {
  display: flex;
  align-items: center;
  gap: 2px;
  width: 84px;
  padding-left: 1px;
  border-right: 1px solid #98a5ba;
}
.yearpick button {
  margin-left: 4px;
}
.yearpick svg {
  display: block;
  width: 17px;
  height: 17px;
}
.combo {
  position: relative;
  display: flex;
  align-items: center;
}
.combo select {
  appearance: none;
  width: 33px;
  height: 17px;
  padding: 0 15px 0 2px;
  border: 1px solid #98a5ba;
  border-radius: 0;
  background: #fff;
}
.combo .tri {
  position: absolute;
  right: 5px;
  border-top-color: #1d2942;
}
.days {
  display: grid;
  grid-template-columns: 75px 28px 62px 28px 71px 28px 49px 28px;
  grid-auto-rows: 19px;
  gap: 2px 3px;
  align-items: center;
  align-content: start;
  padding-left: 6px;
  color: #8a95a9;
}
.days label {
  white-space: nowrap;
}
.days .r {
  text-align: right;
}
.days input {
  width: 28px;
  height: 19px;
  padding: 0 1px;
  border: 1px solid #98a5ba;
  background: #dadee7;
  color: #000;
}
.leavegrid {
  display: flex;
  flex: 1;
}
.vtools {
  display: flex;
  flex-direction: column;
  align-items: center;
  gap: 12px;
  width: 32px;
  padding-top: 6px;
}
.vtools svg {
  display: block;
  width: 17px;
  height: 17px;
}
.leavebody {
  display: flex;
  flex-direction: column;
}
.leavebody .blank {
  flex: 1;
}
.leavebody .gridfoot {
  padding: 3px 14px;
}
.gridfoot span {
  display: block;
  width: 62px;
  height: 30px;
  padding-left: 10px;
  border: 1px solid #c8ced9;
  border-radius: 2px;
  background: #fff;
  font-size: 12px;
  line-height: 28px;
  overflow: hidden;
  white-space: nowrap;
}
.leavegrid .solo {
  align-self: start;
  margin: 6px 5px 0 8px;
}
.edit .actions {
  height: 40px;
  margin-right: 9px;
  justify-content: end;
  gap: 54px;
  padding-right: 27px;
}

/* Wybór dni urlopu */
.pick {
  left: 224px;
  top: 593px;
  width: 421px;
  padding: 0 6px 7px;
  background: linear-gradient(#a3b0c8, #c5cedd 30px, #c5cedd);
}
.pick .strip {
  height: 31px;
  font-size: 13px;
  line-height: 22px;
  text-align: center;
}
.pick .dlgbody {
  background: #bbc7d7;
}
.kind {
  display: flex;
  align-items: center;
  justify-content: space-between;
  height: 19px;
  margin: 4px 5px 11px 4px;
}
.kind .combo {
  width: 329px;
}
.kind select {
  width: 100%;
  height: 20px;
  border: 2px solid #76839a;
  padding-left: 1px;
}
.options {
  position: absolute;
  top: 20px;
  left: 0;
  right: 0;
  margin: 0;
  padding: 0;
  border: 1px solid #76839a;
  background: #fff;
  list-style: none;
}
.options li {
  height: 13px;
  padding-left: 1px;
  line-height: 13px;
}
.options .on {
  background: #0078d7;
  color: #fff;
  outline: 1px dotted #e08a30;
  outline-offset: -1px;
}
.calbox {
  margin: 0 5px;
  padding: 17px 29px 17px;
  border: 1px solid #98a5ba;
  background: #ffeedb;
}
.cal {
  background: #fff8f0;
}
.calhead {
  height: 20px;
  padding: 4px 7px;
  background: linear-gradient(#e6e9ee 50%, #dadfe7 50%);
}
.calhead i {
  border: solid transparent;
  border-width: 6px 6px 6px 0;
  border-right-color: #3d4759;
}
.months {
  display: grid;
  grid-template-columns: 1fr 1fr;
}
.months table {
  justify-self: start;
  border-collapse: collapse;
  table-layout: fixed;
  width: 155px;
  font-size: 13px;
}
.months td, .months th {
  width: 20px;
  height: 18px;
  padding: 0 2px 0 0;
  text-align: right;
  font-weight: normal;
  line-height: 16px;
}
.months .wd th {
  height: 19px;
  padding-right: 5px;
}
.months th:first-child {
  width: 15px;
  padding-right: 1px;
  font-size: 9px;
}
.months tr:not(.wd) th {
  border-right: 1px solid #1d2942;
}
.months .out {
  color: #8b8b8b;
}
.months .pickd {
  border: 1px solid #dcc078;
  background: #ffe8a6;
}
.pick .actions {
  height: 40px;
  margin-top: 4px;
  padding: 3px 0;
  border: 1px solid #98a5ba;
  gap: 38px;
}
.pick .actions .default {
  width: 101px;
  margin-left: 188px;
  padding-left: 16px;
  border: 1px solid #b6b7b4;
  border-radius: 2px;
  background: linear-gradient(#eef0f4, #d3d8e2);
  box-shadow: inset 0 0 0 1px #f6ecc9;
}

/* Oznaczenia kroków */
.steps {
  position: absolute;
  inset: 0;
  z-index: 2;
  pointer-events: none;
}
.ring {
  position: absolute;
  border: 2px solid #f20d12;
  border-radius: 5px;
  box-shadow: 1px 2px 4px rgba(60, 40, 30, .5), inset 1px 2px 4px rgba(60, 40, 30, .3);
}
.badge {
  position: absolute;
  width: 30px;
  height: 30px;
  border: 2px solid #f00a10;
  border-radius: 50%;
  background: rgba(214, 18, 28, .88);
  box-shadow: 1px 2px 4px rgba(40, 20, 20, .5);
  color: #fff;
  font-size: 15px;
  line-height: 26px;
  text-align: center;
}
.r1 { left: 20px; top: 216px; width: 128px; height: 32px; }
.r2 { left: 200px; top: 225px; width: 409px; height: 21px; }
.r3 { left: 237px; top: 103px; width: 40px; height: 40px; }
.r4 { left: 341px; top: 471px; width: 49px; height: 31px; }
.r6 { left: 62px; top: 598px; width: 36px; height: 31px; }
.r7 { left: 222px; top: 655px; width: 417px; height: 25px; }
.r7b { left: 438px; top: 816px; width: 119px; height: 22px; }
.b1 { left: 140px; top: 216px; }
.b2 { left: 182px; top: 225px; }
.b3 { left: 263px; top: 130px; }
.b4 { left: 350px; top: 492px; }
.b5 { left: 246px; top: 515px; }
.b6 { left: 84px; top: 583px; }
.b7 { left: 229px; top: 701px; }
.b8 { left: 404px; top: 889px; }
.b9 { left: 607px; top: 950px; }
.arrows {
  position: absolute;
  left: 251px;
  top: 673px;
  width: 220px;
  height: 150px;
}
```
